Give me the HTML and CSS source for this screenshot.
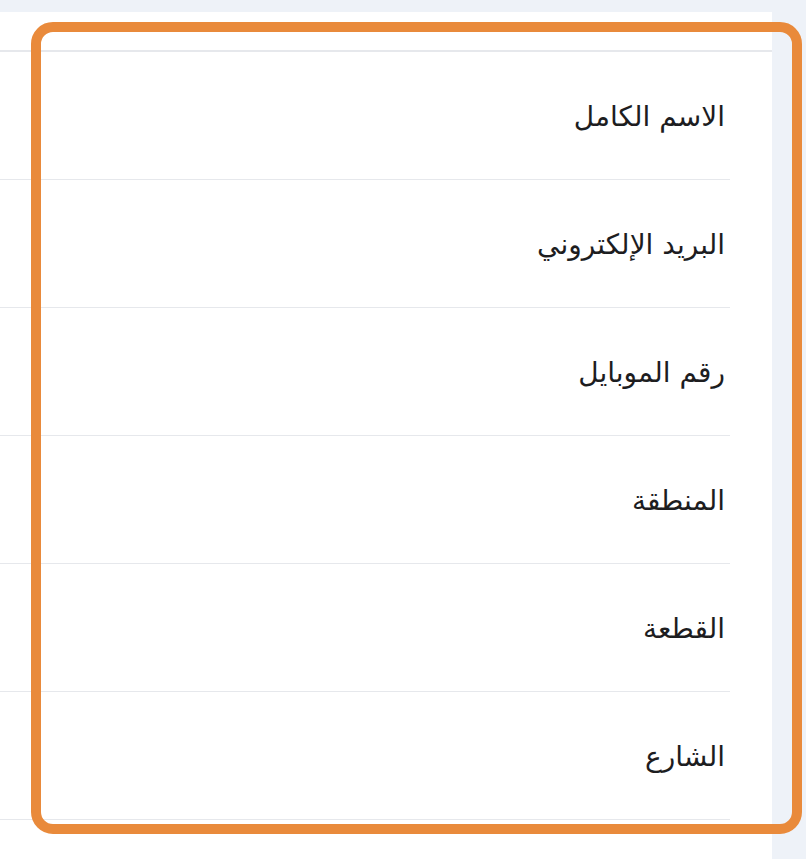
FILE: index.html
```html
<!DOCTYPE html>
<html lang="ar" dir="rtl">
<head>
<meta charset="utf-8">
<title>بيانات العميل</title>
<link rel="stylesheet" href="styles.css">
</head>
<body>
<div class="page">
  <div class="card">
    <div class="table">
      <div class="row"><span class="label">الاسم الكامل</span></div>
      <div class="row"><span class="label">البريد الإلكتروني</span></div>
      <div class="row"><span class="label">رقم الموبايل</span></div>
      <div class="row"><span class="label">المنطقة</span></div>
      <div class="row"><span class="label">القطعة</span></div>
      <div class="row"><span class="label">الشارع</span></div>
    </div>
  </div>
</div>
<div class="highlight"></div>
</body>
</html>
```

FILE: styles.css
```css
html, body {
  margin: 0;
  padding: 0;
}
body {
  background: #eef2f8;
  font-family: "DejaVu Sans", "Noto Sans", sans-serif;
  color: #1d1d1f;
  width: 806px;
  height: 859px;
  overflow: hidden;
}
.page {
  padding-top: 12px;
  padding-right: 34px;
  height: 847px;
}
.card {
  background: #ffffff;
  height: 100%;
  padding-top: 38px;
  box-sizing: border-box;
}
.table {
  border-top: 2px solid #e6e8ec;
}
.row {
  height: 128px;
  box-sizing: border-box;
  border-bottom: 1px solid #e6e8ec;
  margin-right: 42px;
  padding-right: 5px;
  padding-top: 3px;
  display: flex;
  align-items: center;
}
.label {
  font-size: 28px;
  line-height: 1;
}
.highlight {
  position: absolute;
  left: 31px;
  top: 22px;
  width: 771px;
  height: 812px;
  box-sizing: border-box;
  border: 10px solid #e98a3b;
  border-radius: 22px;
  pointer-events: none;
}
```
